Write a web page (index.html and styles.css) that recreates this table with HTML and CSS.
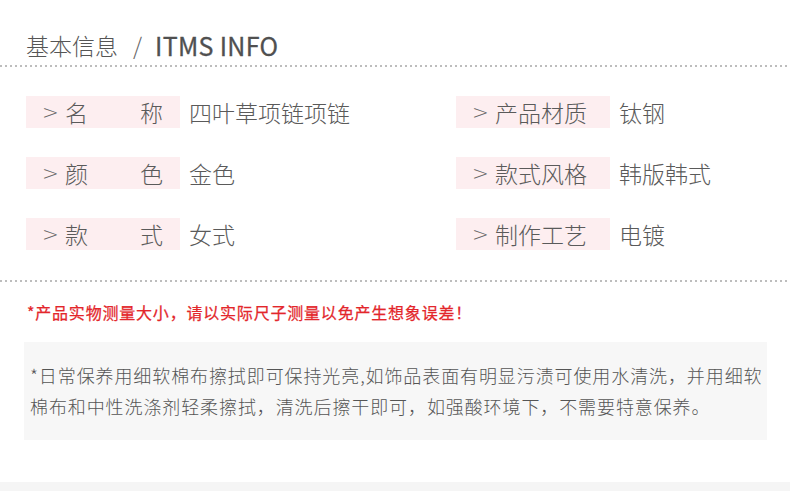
FILE: index.html
```html
<!DOCTYPE html>
<html lang="zh-CN">
<head>
<meta charset="utf-8">
<link rel="stylesheet" href="styles.css">
</head>
<body>
<div class="page">
  <h1 class="title"><span class="zh">基本信息</span><span class="slash">/</span><span class="en">ITMS INFO</span></h1>
  <div class="dots"></div>
  <div class="specs">
    <div class="spec"><div class="label"><span class="chev">&gt;</span><span class="name two"><span>名</span><span>称</span></span></div><div class="value">四叶草项链项链</div></div>
    <div class="spec"><div class="label"><span class="chev">&gt;</span><span class="name">产品材质</span></div><div class="value">钛钢</div></div>
    <div class="spec"><div class="label"><span class="chev">&gt;</span><span class="name two"><span>颜</span><span>色</span></span></div><div class="value">金色</div></div>
    <div class="spec"><div class="label"><span class="chev">&gt;</span><span class="name">款式风格</span></div><div class="value">韩版韩式</div></div>
    <div class="spec"><div class="label"><span class="chev">&gt;</span><span class="name two"><span>款</span><span>式</span></span></div><div class="value">女式</div></div>
    <div class="spec"><div class="label"><span class="chev">&gt;</span><span class="name">制作工艺</span></div><div class="value">电镀</div></div>
  </div>
  <div class="dots dots-2"></div>
  <p class="warn">*产品实物测量大小，请以实际尺子测量以免产生想象误差！</p>
  <div class="care">*日常保养用细软棉布擦拭即可保持光亮,如饰品表面有明显污渍可使用水清洗，并用细软棉布和中性洗涤剂轻柔擦拭，清洗后擦干即可，如强酸环境下，不需要特意保养。</div>
  <div class="bottom"></div>
</div>
</body>
</html>
```
FILE: styles.css
```css
html, body {
  margin: 0;
  padding: 0;
  background: #fff;
}
body {
  font-family: "Noto Sans CJK SC", "Noto Sans", sans-serif;
  color: #555;
  width: 790px;
  height: 491px;
  overflow: hidden;
}
.page {
  display: flex;
  flex-direction: column;
}
.title {
  margin: 30px 0 0 26px;
  height: 30px;
  line-height: 30px;
  font-size: 23px;
  font-weight: 300;
  color: #555;
  display: flex;
  align-items: center;
}
.title .slash {
  margin: 0 13px 0 15px;
  font-weight: 300;
  color: #666;
}
.title .en {
  font-size: 25px;
  font-weight: 400;
  letter-spacing: 0.3px;
  color: #505050;
  -webkit-text-stroke: 0.3px #505050;
}
.dots {
  margin-top: 5px;
  height: 2px;
  background-image: linear-gradient(to right, #bdbdbd 2px, transparent 2px);
  background-size: 5px 2px;
  background-repeat: repeat-x;
}
.dots-2 {
  margin-top: 30px;
}
.specs {
  margin-top: 29px;
  padding-left: 26px;
  display: grid;
  grid-template-columns: 430px 1fr;
  row-gap: 29px;
}
.spec {
  display: flex;
  align-items: center;
  height: 32px;
}
.label {
  width: 154px;
  height: 32px;
  background: #fdeef0;
  display: flex;
  align-items: center;
  padding-left: 16px;
  box-sizing: border-box;
  font-size: 23px;
  font-weight: 300;
  color: #5a5a5a;
}
.chev {
  width: 23px;
  font-family: "DejaVu Sans", sans-serif;
  font-weight: 300;
  font-size: 20px;
  color: #666;
}
.name {
  white-space: nowrap;
}
.name.two {
  width: 98px;
  display: flex;
  justify-content: space-between;
}
.value {
  margin-left: 9px;
  font-size: 23px;
  font-weight: 300;
  color: #5a5a5a;
  white-space: nowrap;
}
.warn {
  margin: 20px 0 0 27px;
  height: 20px;
  line-height: 20px;
  font-size: 16px;
  font-weight: 400;
  letter-spacing: 0.8px;
  color: #e3262b;
  -webkit-text-stroke: 0.25px #e3262b;
}
.care {
  margin: 20px 0 0 24px;
  width: 743px;
  box-sizing: border-box;
  padding: 18px 0 18px 6px;
  background: #f7f7f7;
  font-size: 18px;
  line-height: 31px;
  letter-spacing: 0.9px;
  font-weight: 300;
  color: #555;
}
.bottom {
  margin-top: 42px;
  height: 9px;
  background: #f5f5f5;
}
```
